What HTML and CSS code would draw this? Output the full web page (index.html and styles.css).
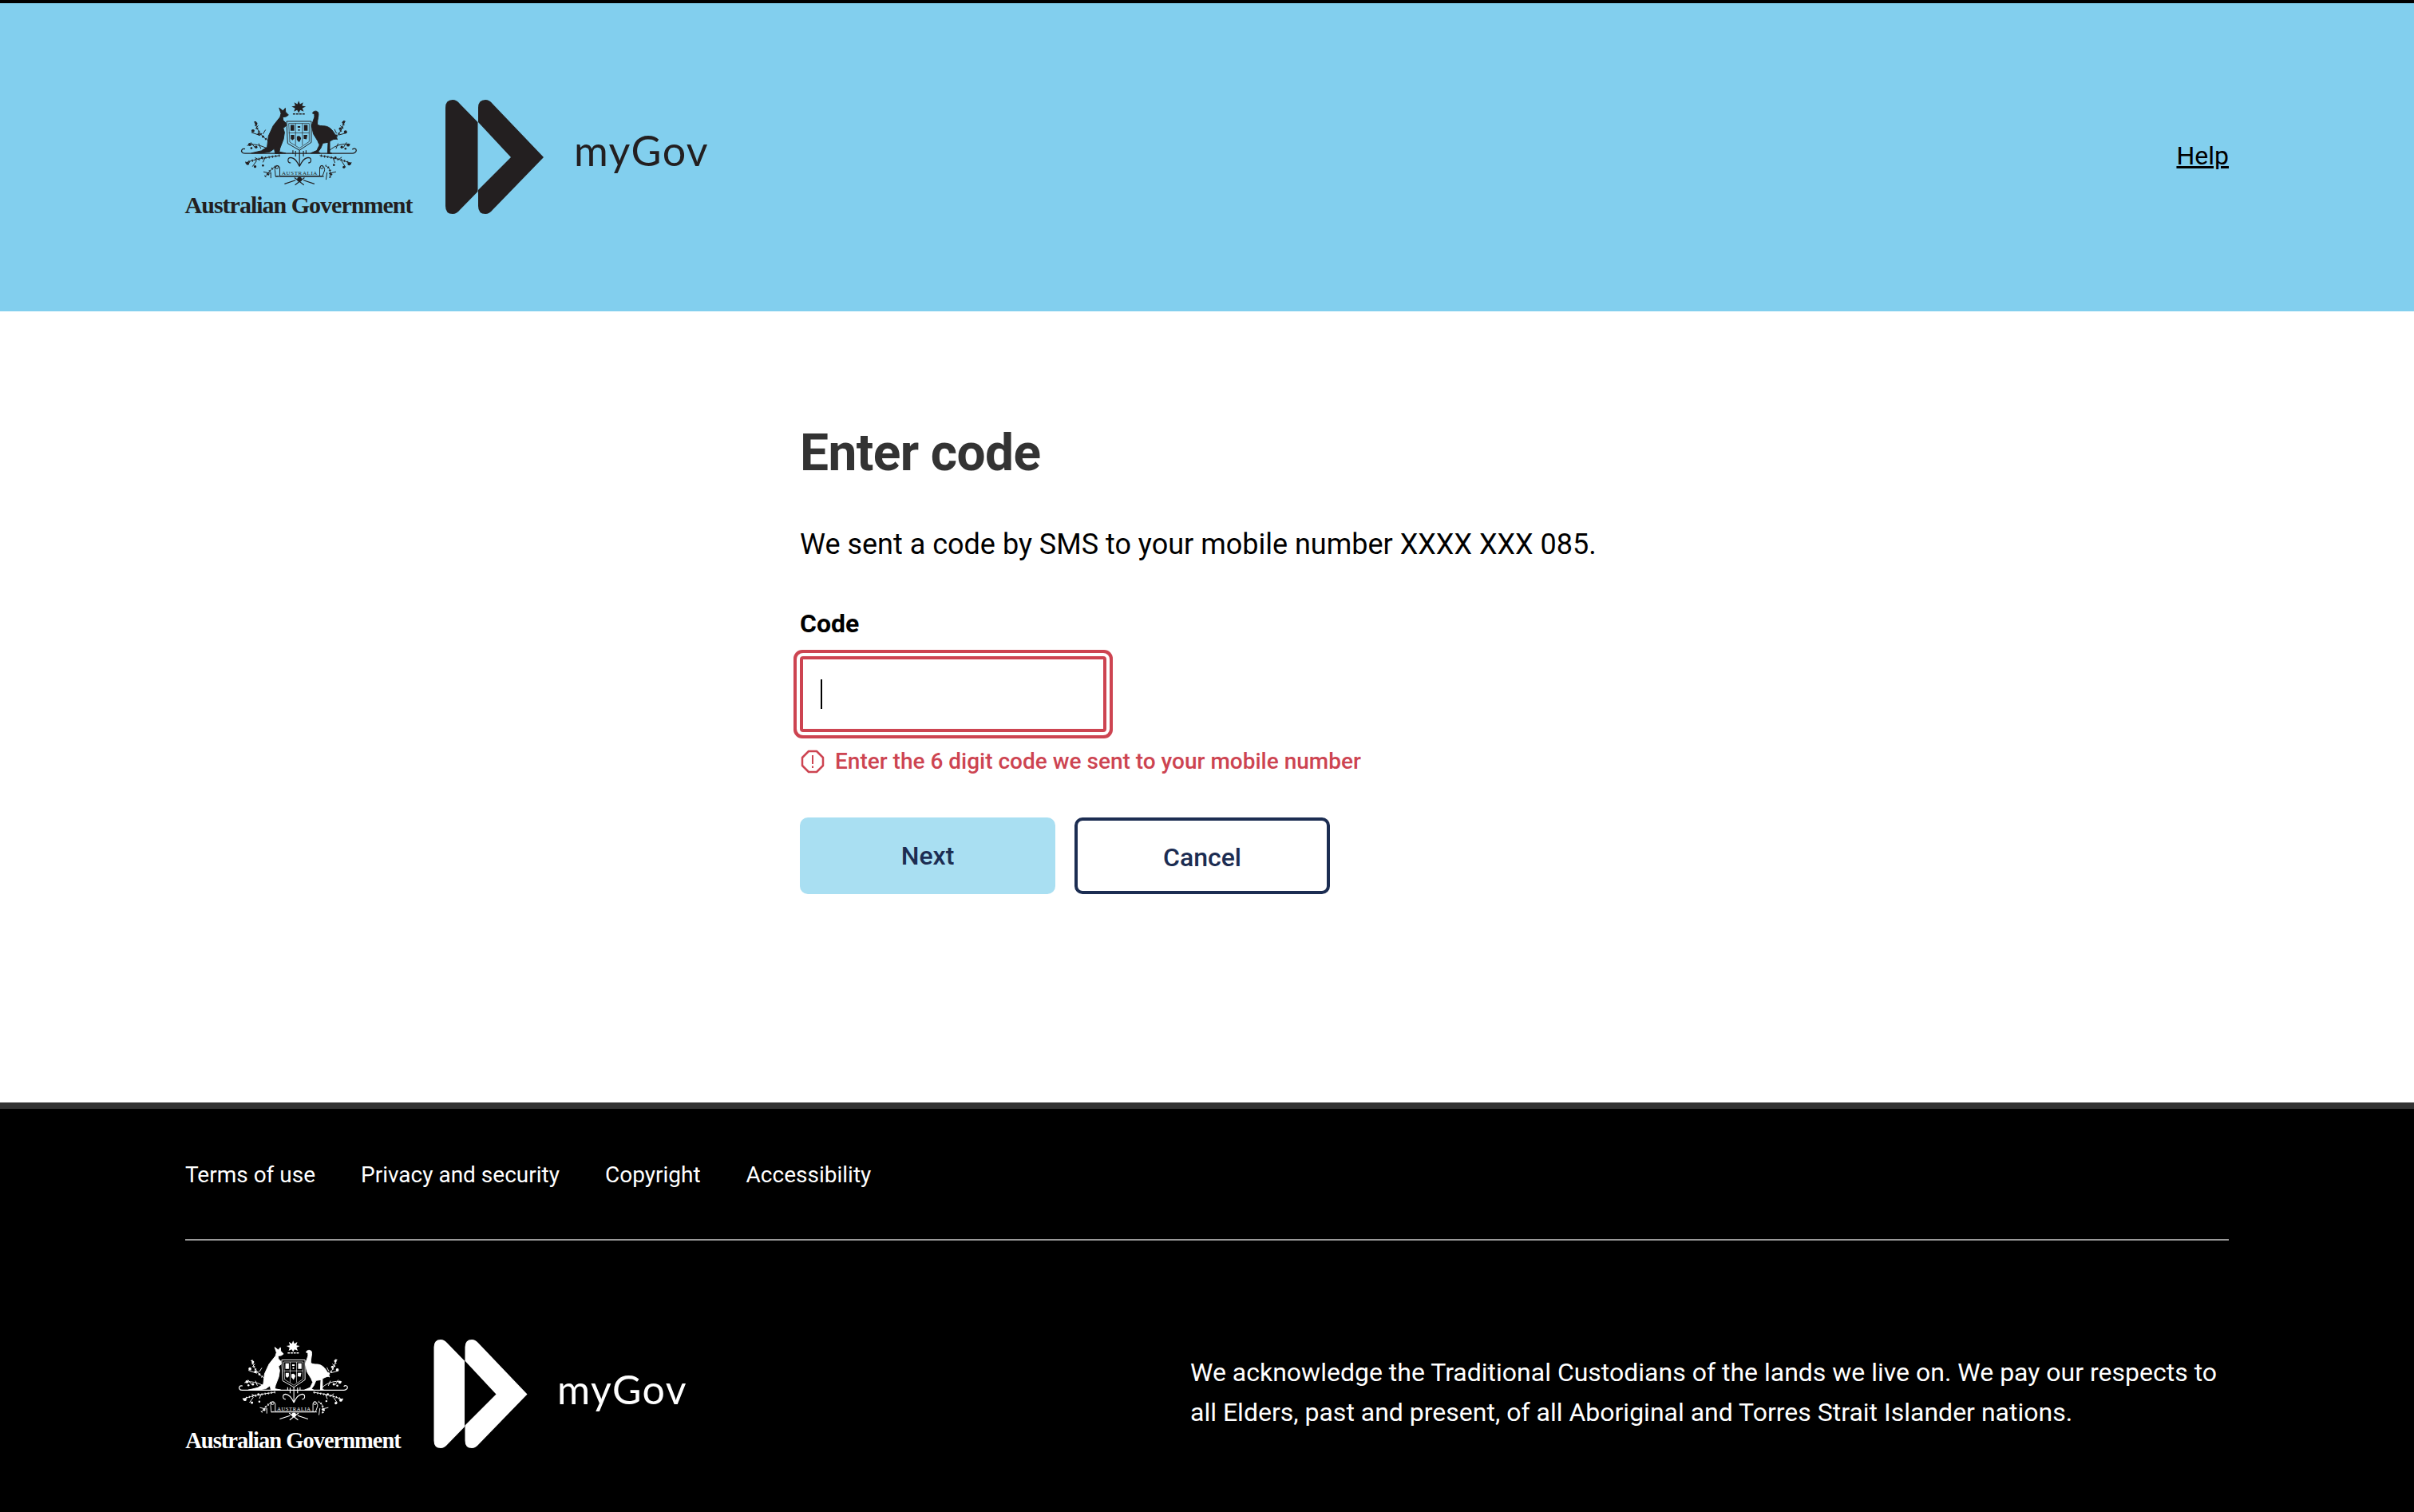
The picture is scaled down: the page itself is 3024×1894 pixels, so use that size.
FILE: index.html
```html
<!DOCTYPE html>
<html lang="en">
<head>
    <meta charset="UTF-8">
    <meta name="viewport" content="width=device-width, initial-scale=1.0">
    <title>Enter code - myGov</title>
    <link rel="stylesheet" href="styles.css">
</head>
<body>
    <!-- Shared logo drawings -->
    <svg class="defs" aria-hidden="true">
        <symbol id="crest" viewBox="90 42 446 328">
            <!-- Star and torse -->
            <polygon fill="currentColor" points="312,46 317,59 329,52 325,65 339,68 326,74 331,87 318,81 312,92 306,81 294,87 298,74 285,68 299,65 295,52 307,59"/>
            <path d="M290 96H335" stroke="currentColor" stroke-width="5" stroke-dasharray="9 3" fill="none"/>
            <!-- Kangaroo -->
            <path fill="currentColor" stroke="currentColor" stroke-width="3" d="M238 73L252 84 261 74 262 88 273 100 264 106 251 108 253 120 263 130 264 141 253 150 258 166 254 192 241 226 238 240 262 245 223 247 219 228 202 240 172 245 132 245 170 236 192 222 197 180 215 141 241 108 245 94Z"/>
            <!-- Emu -->
            <path fill="currentColor" stroke="currentColor" stroke-width="3" d="M364 93C368 84 380 82 386 90 390 100 382 118 383 136 390 142 400 141 412 142 432 144 448 164 459 193 448 188 438 196 430 200L430 243 438 246 422 246 424 204 404 207 396 226 386 240 394 245 358 245 381 235 391 214 384 198 368 172 361 140 372 108 372 96Z"/>
            <!-- Shield -->
            <path fill="none" stroke="currentColor" stroke-width="3" d="M266 124H360V204L315 234 270 208Z"/>
            <path fill="none" stroke="currentColor" stroke-width="2" d="M274 132H352V201L315 226 278 203Z"/>
            <path fill="none" stroke="currentColor" stroke-width="2" d="M300 132V215M326 132V215M274 168H352"/>
            <g fill="currentColor">
                <path d="M281 138H295V160H281ZM332 138H346V160H332Z"/>
                <path d="M308 142h10v6h-10zM310 154h6v6h-6z"/>
                <path d="M282 176H295V190L288 196 282 190ZM305 182C312 176 320 180 321 190L314 204 305 194ZM331 176H345L342 192 331 190Z"/>
            </g>
            <!-- Base bar -->
            <path fill="none" stroke="currentColor" stroke-width="4" d="M108 229C96 226 92 236 96 241 99 247 106 246 110 246H516C524 246 531 240 531 235 531 227 522 225 516 231"/>
            <!-- Stem and curls -->
            <path fill="none" stroke="currentColor" stroke-width="3.5" d="M290 234V248M340 234V248M315 234V296M315 296C308 280 300 264 282 262 268 262 268 282 282 282M315 296C322 280 330 264 348 262 362 262 362 282 348 282M300 236V258M330 236V258"/>
            <!-- Wattle sprays -->
            <g fill="none" stroke="currentColor" stroke-width="3">
                <path d="M146 125C150 150 166 178 194 196M132 166L166 178M158 140L148 152M176 172L186 156"/>
                <path d="M486 122C480 150 468 172 446 190M494 168L464 176M470 140L482 150M456 170L448 154"/>
                <path d="M116 216C140 206 170 216 198 230M130 204L146 224M160 208L168 228"/>
                <path d="M508 212C480 206 450 216 430 234M494 204L482 224M462 208L454 228"/>
                <path d="M110 282C150 266 190 262 240 254M136 296L152 274M176 280L184 262M146 262L164 272"/>
                <path d="M512 284C472 268 440 262 392 254M490 298L476 276M450 282L442 262M476 260L460 272"/>
                <path d="M184 334C196 322 204 306 224 296M206 340L206 318M178 316L204 322"/>
                <path d="M432 338C428 322 440 306 414 292M416 346L420 318M454 316L428 322"/>
            </g>
            <!-- Leaves, as short ticks across the same sprays -->
            <g fill="none" stroke="currentColor" stroke-width="9" stroke-dasharray="3 10">
                <path d="M146 125C150 150 166 178 194 196"/>
                <path d="M486 122C480 150 468 172 446 190"/>
                <path d="M110 282C150 266 190 262 240 254"/>
                <path d="M512 284C472 268 440 262 392 254"/>
                <path d="M184 334C196 322 204 306 224 296"/>
                <path d="M432 338C428 322 440 306 414 292"/>
            </g>
            <g fill="currentColor">
                <circle cx="150" cy="132" r="5"/><circle cx="138" cy="160" r="6"/><circle cx="160" cy="172" r="5"/><circle cx="176" cy="182" r="4"/>
                <circle cx="482" cy="128" r="5"/><circle cx="490" cy="164" r="6"/><circle cx="470" cy="152" r="5"/><circle cx="454" cy="178" r="4"/>
                <circle cx="126" cy="212" r="6"/><circle cx="150" cy="222" r="5"/><circle cx="132" cy="226" r="4"/>
                <circle cx="500" cy="214" r="6"/><circle cx="476" cy="222" r="5"/><circle cx="490" cy="228" r="4"/>
                <circle cx="118" cy="284" r="6"/><circle cx="146" cy="296" r="5"/><circle cx="172" cy="262" r="4"/><circle cx="176" cy="292" r="4"/>
                <circle cx="504" cy="286" r="6"/><circle cx="484" cy="298" r="5"/><circle cx="452" cy="262" r="4"/><circle cx="446" cy="290" r="4"/>
                <circle cx="196" cy="326" r="4"/><circle cx="436" cy="326" r="4"/>
            </g>
            <!-- Scroll -->
            <path fill="none" stroke="currentColor" stroke-width="3" d="M222 312C218 296 236 286 240 300L240 332H392L392 300C396 286 414 296 410 312L402 334H234L224 334ZM224 334L236 332M408 334L392 332"/>
            <circle cx="229" cy="298" r="6" fill="none" stroke="currentColor" stroke-width="3"/>
            <circle cx="400" cy="298" r="6" fill="none" stroke="currentColor" stroke-width="3"/>
            <text class="crest-scroll" x="316" y="329" text-anchor="middle" fill="currentColor">AUSTRALIA</text>
            <!-- Ribbon tie -->
            <path fill="none" stroke="currentColor" stroke-width="3.5" d="M258 362L300 348M372 362L330 348M296 338L332 366M334 338L298 366"/>
            <circle cx="315" cy="345" r="9" fill="currentColor"/>
        </symbol>
        <symbol id="mark" viewBox="0 0 123 143">
            <path fill="currentColor" d="M0 10Q0 0 9 0 14 0 18 5L40.5 28V115L18 138Q14 143 9 143 0 143 0 133Z"/>
            <path fill="currentColor" d="M41 10Q41 0 50 0 55 0 59 5L123 72 59 138Q55 143 50 143 41 143 41 133V113L82 72 41 28Z"/>
        </symbol>
    </svg>

    <header class="site-header">
        <div class="brand">
            <div class="gov-lockup">
                <svg class="crest"><use href="#crest"/></svg>
                <span class="gov-name">Australian Government</span>
            </div>
            <svg class="mark"><use href="#mark"/></svg>
            <span class="mygov">myGov</span>
        </div>
        <a class="help-link" href="#">Help</a>
    </header>

    <main class="content">
        <h1>Enter code</h1>
        <p class="intro">We sent a code by SMS to your mobile number XXXX XXX 085.</p>

        <label class="field-label" for="code">Code</label>
        <div class="input-wrap">
            <input type="text" id="code" name="code">
            <span class="caret"></span>
        </div>
        <div class="error">
            <svg class="error-icon" viewBox="0 0 30 30">
                <path d="M10 2H20L28 10V20L20 28H10L2 20V10Z" fill="none" stroke="currentColor" stroke-width="2.5" stroke-linejoin="round"/>
                <path d="M15 7V18M15 20.5V23" fill="none" stroke="currentColor" stroke-width="2"/>
            </svg>
            <span>Enter the 6 digit code we sent to your mobile number</span>
        </div>

        <div class="actions">
            <button class="btn btn-next" type="button">Next</button>
            <button class="btn btn-cancel" type="button">Cancel</button>
        </div>
    </main>

    <footer class="site-footer">
        <nav class="footer-links">
            <a href="#">Terms of use</a>
            <a href="#">Privacy and security</a>
            <a href="#">Copyright</a>
            <a href="#">Accessibility</a>
        </nav>
        <div class="footer-bottom">
            <div class="brand brand-footer">
                <div class="gov-lockup">
                    <svg class="crest"><use href="#crest"/></svg>
                    <span class="gov-name">Australian Government</span>
                </div>
                <svg class="mark"><use href="#mark"/></svg>
                <span class="mygov">myGov</span>
            </div>
            <p class="acknowledge">We acknowledge the Traditional Custodians of the lands we live on. We pay our respects to all Elders, past and present, of all Aboriginal and Torres Strait Islander nations.</p>
        </div>
    </footer>
</body>
</html>
```

FILE: styles.css
```css
body {
    font-family: Roboto, Arial, sans-serif;
    margin: 0;
    min-height: 1894px;
    display: flex;
    flex-direction: column;
    background: #fff;
    color: #000;
}
.defs {
    display: none;
}
.crest-scroll {
    font-family: "Liberation Serif", serif;
    font-size: 21px;
    letter-spacing: 2px;
}

/* Header */
.site-header {
    height: 386px;
    border-top: 4px solid #000;
    padding: 0 232px;
    display: flex;
    justify-content: space-between;
    align-items: center;
    background-color: #82cfee;
    color: #231f20;
}
.brand {
    display: flex;
    align-items: flex-start;
    margin-top: 2px;
}
.gov-lockup {
    display: flex;
    flex-direction: column;
    align-items: center;
    width: 284px;
}
.crest {
    width: 147px;
    height: 108px;
}
.gov-name {
    font-family: "Liberation Serif", serif;
    font-weight: bold;
    font-size: 30px;
    letter-spacing: -1px;
    line-height: 30px;
    margin-top: 9px;
    white-space: nowrap;
}
.mark {
    width: 123px;
    height: 143px;
    margin-left: 42px;
}
.mygov {
    font-family: Lato, sans-serif;
    font-size: 52px;
    line-height: 68px;
    letter-spacing: 1.4px;
    margin-left: 38px;
    margin-top: 29px;
}
.help-link {
    font-size: 32px;
    color: #000;
    margin-top: -4px;
}

/* Form */
.content {
    flex: 1;
    width: 1020px;
    margin: 0 auto;
    padding-top: 138px;
    box-sizing: border-box;
}
h1 {
    font-size: 64px;
    line-height: 80px;
    font-weight: 700;
    color: #333;
    letter-spacing: -0.6px;
    margin: 0;
}
.intro {
    font-size: 36px;
    line-height: 50px;
    margin: 49px 0 0;
}
.field-label {
    display: block;
    font-size: 32px;
    line-height: 44px;
    font-weight: 700;
    margin-top: 52px;
}
.input-wrap {
    position: relative;
    width: 384px;
    height: 95px;
    margin-top: 19px;
}
.input-wrap input {
    width: 100%;
    height: 100%;
    box-sizing: border-box;
    border: 4px solid #cd4451;
    border-radius: 4px;
    background: #fff;
    box-shadow: 0 0 0 4px #fff, 0 0 0 8px #cd4451;
    outline: none;
}
.caret {
    position: absolute;
    left: 26px;
    top: 29px;
    width: 2px;
    height: 37px;
    background: #000;
}
.error {
    display: flex;
    align-items: center;
    gap: 13px;
    margin-top: 22px;
    color: #cd4451;
    font-size: 28px;
    line-height: 30px;
    font-weight: 500;
}
.error-icon {
    width: 30px;
    height: 30px;
    margin-left: 1px;
}
.actions {
    display: flex;
    gap: 24px;
    margin-top: 55px;
}
.btn {
    width: 320px;
    height: 96px;
    border-radius: 10px;
    font-family: Roboto, Arial, sans-serif;
    font-size: 32px;
    font-weight: 500;
    color: #1c2d52;
    cursor: pointer;
}
.btn-next {
    background-color: #a9dff2;
    border: none;
}
.btn-cancel {
    background-color: #fff;
    border: 4px solid #1c2d52;
    padding-top: 5px;
}

/* Footer */
.site-footer {
    height: 513px;
    box-sizing: border-box;
    border-top: 8px solid #333;
    background-color: #000;
    color: #fff;
    padding: 0 232px;
}
.footer-links {
    display: flex;
    gap: 57px;
    height: 165px;
    box-sizing: border-box;
    padding-top: 64px;
    border-bottom: 2px solid #999;
}
.footer-links a {
    font-size: 28px;
    line-height: 38px;
    color: #fff;
    text-decoration: none;
}
.footer-bottom {
    display: flex;
    justify-content: space-between;
    align-items: center;
    padding-top: 124px;
}
.brand-footer {
    margin-top: 0;
}
.brand-footer .gov-lockup {
    width: 270px;
}
.brand-footer .crest {
    width: 139px;
    height: 102px;
}
.brand-footer .gov-name {
    font-size: 28.5px;
    letter-spacing: -1px;
    line-height: 28px;
    margin-top: 11px;
}
.brand-footer .mark {
    width: 118px;
    height: 136px;
    margin-left: 41px;
}
.brand-footer .mygov {
    font-size: 50px;
    margin-left: 37px;
    margin-top: 28px;
}
.acknowledge {
    width: 1301px;
    font-size: 32px;
    line-height: 50px;
    margin: -10px 0 0;
}
```
